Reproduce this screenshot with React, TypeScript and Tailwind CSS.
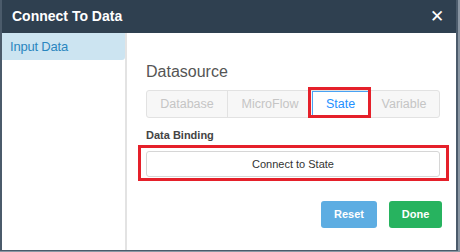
import React from 'react';

const tabs = ['Database', 'MicroFlow', 'State', 'Variable'];

const App: React.FC = () => {
  const active = 'State';
  return (
    <div className="w-[460px] h-[252px] bg-[#8a96a3] font-['Liberation_Sans',Arial,sans-serif]">
      <div className="w-[458px] h-[251px] flex flex-col bg-[#34495e] border-l-2 border-r-2 border-b border-[#4b5b6b]">
        <div className="h-[33px] shrink-0 flex items-center justify-between pl-[10px] pr-[12px] bg-[#2f4050]">
          <span className="text-white text-[14px] font-bold">Connect To Data</span>
          <span className="text-white text-[17px] leading-none">✕</span>
        </div>
        <div className="flex flex-1 bg-white">
          <div className="w-[125px] border-r-2 border-[#e3e3e3]">
            <div className="h-[27px] pl-[8px] flex items-center bg-[#cce4f1] text-[#2a86bf] text-[13px] tracking-[-0.2px] rounded-br-[3px]">
              Input Data
            </div>
          </div>
          <div className="flex-1 flex flex-col pl-[19px] pr-[14px] pt-[29px]">
            <div className="text-[#555] text-[16px] leading-[20px]">Datasource</div>
            <div className="mt-[8px] flex h-[28px] border border-[#e2e2e2] rounded-[3px] bg-[#f7f7f7] w-[294px]">
              {tabs.map((t, i) => (
                <div key={t} className={`relative flex items-center justify-center text-[12.5px] ${t === active ? 'bg-white text-[#1e90ff] border border-[#49a3f5] w-[57px]' : 'text-[#c5c5c5]'} ${i === 0 ? 'w-[81px] border-r border-[#e2e2e2]' : ''} ${i === 1 ? 'w-[84px]' : ''} ${i === 3 ? 'flex-1' : ''}`}>
                  {t}
                  {t === active && (
                    <div className="absolute -left-[5px] -top-[5px] -right-[3px] -bottom-[2px] border-[3px] border-[#e5202a]" />
                  )}
                </div>
              ))}
            </div>
            <div className="mt-[10px] text-[#444] text-[11px] font-bold leading-[14px]">Data Binding</div>
            <div className="relative mt-[9px] w-[294px]">
              <div className="h-[26px] border border-[#d6d6d6] rounded-[3px] flex items-center justify-center text-[#333] text-[11px]">
                Connect to State
              </div>
              <div className="absolute -left-[8px] -top-[6px] -right-[9px] -bottom-[4px] border-[3px] border-[#e5202a]" />
            </div>
            <div className="mt-[24px] flex justify-end gap-[12px] pr-0">
              <button className="w-[56px] h-[27px] rounded-[3px] bg-[#5dade2] text-white text-[11px] font-bold">Reset</button>
              <button className="w-[53px] h-[27px] rounded-[3px] bg-[#27b35f] text-white text-[11px] font-bold">Done</button>
            </div>
          </div>
        </div>
      </div>
    </div>
  );
};

export default App;
